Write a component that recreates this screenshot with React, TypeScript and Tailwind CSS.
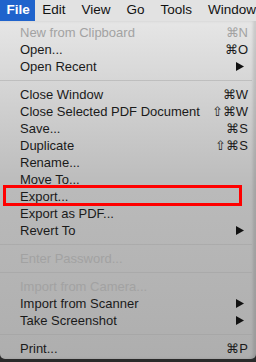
import { ReactNode } from "react"

type Item =
  | { kind: "sep" }
  | { kind: "item"; label: string; shortcut?: string; disabled?: boolean; submenu?: boolean; boxed?: boolean }

const ITEMS: Item[] = [
  { kind: "item", label: "New from Clipboard", shortcut: "⌘N", disabled: true },
  { kind: "item", label: "Open...", shortcut: "⌘O" },
  { kind: "item", label: "Open Recent", submenu: true },
  { kind: "sep" },
  { kind: "item", label: "Close Window", shortcut: "⌘W" },
  { kind: "item", label: "Close Selected PDF Document", shortcut: "⇧⌘W" },
  { kind: "item", label: "Save...", shortcut: "⌘S" },
  { kind: "item", label: "Duplicate", shortcut: "⇧⌘S" },
  { kind: "item", label: "Rename..." },
  { kind: "item", label: "Move To..." },
  { kind: "item", label: "Export...", boxed: true },
  { kind: "item", label: "Export as PDF..." },
  { kind: "item", label: "Revert To", submenu: true },
  { kind: "sep" },
  { kind: "item", label: "Enter Password...", disabled: true },
  { kind: "sep" },
  { kind: "item", label: "Import from Camera...", disabled: true },
  { kind: "item", label: "Import from Scanner", submenu: true },
  { kind: "item", label: "Take Screenshot", submenu: true },
  { kind: "sep" },
  { kind: "item", label: "Print...", shortcut: "⌘P" },
]

const MENUS = ["Edit", "View", "Go", "Tools", "Window"]

function Row({ item }: { item: Extract<Item, { kind: "item" }> }): ReactNode {
  return (
    <div
      className={`relative flex h-[17px] items-center justify-between whitespace-nowrap pl-[20px] pr-[4px] text-[13px] leading-none ${
        item.disabled ? "text-[#a2a2a2]" : "text-[#1a1a1a]"
      }`}
    >
      <span>{item.label}</span>
      {item.shortcut && <span>{item.shortcut}</span>}
      {item.submenu && (
        <svg width="8" height="9" viewBox="0 0 8 9" className="mr-[4px]">
          <path d="M0 0 L8 4.5 L0 9 Z" fill="#111" />
        </svg>
      )}
      {item.boxed && (
        <div className="absolute left-[3px] top-[-3px] h-[21px] w-[239px] border-[3px] border-[#ff0000]" />
      )}
    </div>
  )
}

export default function App() {
  return (
    <div
      className="w-[256px] h-[362px] overflow-hidden bg-[#2a2a2a]"
      style={{ fontFamily: '"Liberation Sans", Arial, sans-serif' }}
    >
      {/* menu bar */}
      <div className="flex h-[21px] items-center gap-[16px] whitespace-nowrap bg-[#e2e2e2] text-[13.5px] text-[#111]">
        <div className="flex h-full w-[38px] items-center justify-center bg-[#1f63cc] pl-[1px] font-bold text-white">
          File
        </div>
        {MENUS.map((m, i) => (
          <div key={m} className={i === 0 ? "-ml-[9px]" : ""}>
            {m}
          </div>
        ))}
      </div>

      {/* dropdown */}
      <div className="h-[338px] rounded-b-[5px] bg-gradient-to-b from-[#e6e6e6] via-[#bababa] to-[#aeaeae] pt-[2.5px] pr-[4px] shadow-[inset_-3px_0_3px_rgba(0,0,0,0.12)]">
        {ITEMS.map((it, i) =>
          it.kind === "sep" ? (
            <div key={i} className="flex h-[11px] items-center">
              <div className="h-[1px] w-full bg-[#9c9c9c] opacity-40" />
            </div>
          ) : (
            <Row key={i} item={it} />
          ),
        )}
      </div>
    </div>
  )
}
